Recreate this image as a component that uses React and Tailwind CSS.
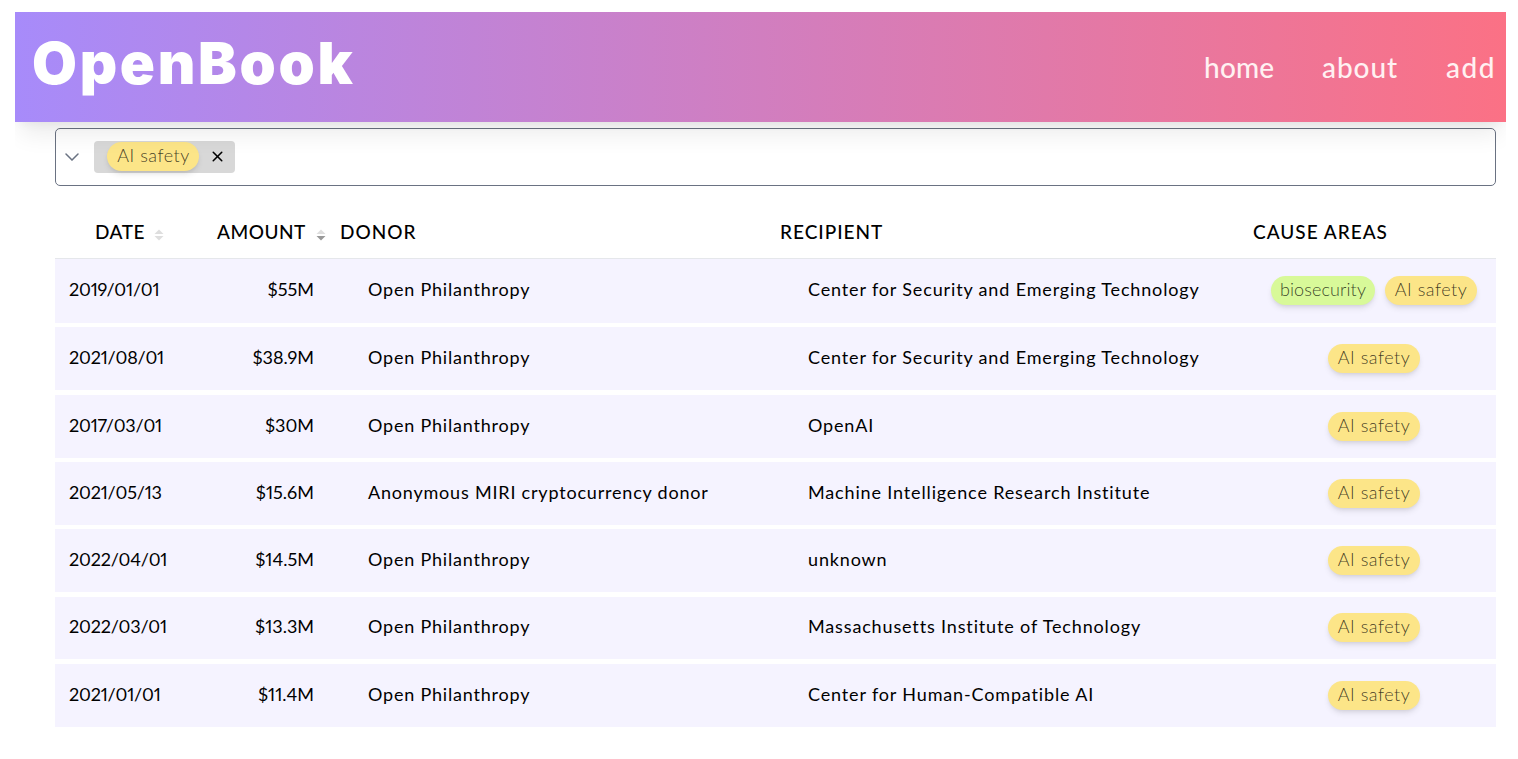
import { X } from "lucide-react";

const grants = [
  { date: "2019/01/01", amount: "$55M", donor: "Open Philanthropy", recipient: "Center for Security and Emerging Technology", causes: ["biosecurity", "AI safety"] },
  { date: "2021/08/01", amount: "$38.9M", donor: "Open Philanthropy", recipient: "Center for Security and Emerging Technology", causes: ["AI safety"] },
  { date: "2017/03/01", amount: "$30M", donor: "Open Philanthropy", recipient: "OpenAI", causes: ["AI safety"] },
  { date: "2021/05/13", amount: "$15.6M", donor: "Anonymous MIRI cryptocurrency donor", recipient: "Machine Intelligence Research Institute", causes: ["AI safety"] },
  { date: "2022/04/01", amount: "$14.5M", donor: "Open Philanthropy", recipient: "unknown", causes: ["AI safety"] },
  { date: "2022/03/01", amount: "$13.3M", donor: "Open Philanthropy", recipient: "Massachusetts Institute of Technology", causes: ["AI safety"] },
  { date: "2021/01/01", amount: "$11.4M", donor: "Open Philanthropy", recipient: "Center for Human-Compatible AI", causes: ["AI safety"] },
];

const tagStyles = {
  biosecurity: "w-[104px] bg-lime-200 tracking-[0.1px]",
  "AI safety": "w-[92px] bg-[#fce588] tracking-[0.5px]",
};

function Tag({ name }) {
  return (
    <span
      className={`flex h-[29px] shrink-0 items-center justify-center rounded-full pb-[2px] pl-px text-[18px] font-light whitespace-nowrap text-black/75 shadow-md ${tagStyles[name]}`}
    >
      {name}
    </span>
  );
}

function SortIcon({ active }) {
  return (
    <svg width="10" height="12" viewBox="0 0 10 12" className="shrink-0">
      <path d="M5 0.5 9.5 5h-9z" fill="#dedede" />
      <path d="M5 11.5 9.5 7h-9z" fill={active ? "#999999" : "#dedede"} />
    </svg>
  );
}

function Header() {
  return (
    <header className="relative z-10 flex h-[110px] items-start justify-between bg-linear-to-r/srgb from-[#a78bfa] to-[#fb7185] pr-[10px] pl-[17px] text-white shadow-[0_18px_22px_-6px_rgba(0,0,0,0.08),0_6px_10px_-5px_rgba(0,0,0,0.06)]">
      <h1 className="pt-[15px] font-[Inter,sans-serif] text-[58px] leading-[72px] font-black tracking-[2.7px]">
        OpenBook
      </h1>
      <nav className="flex gap-[48px] pt-[37px] text-[28px] leading-[36px] font-medium text-rose-50">
        <a href="#home" className="tracking-[0.1px]">home</a>
        <a href="#about" className="tracking-[0.9px]">about</a>
        <a href="#add" className="tracking-[1.5px]">add</a>
      </nav>
    </header>
  );
}

function CauseFilter() {
  return (
    <div className="flex h-[58px] items-center rounded-[5px] border border-gray-500 pl-[9px]">
      <svg width="14" height="8" viewBox="0 0 14 8" fill="none" className="text-gray-500">
        <path d="M1 1l6 6 6-6" stroke="currentColor" strokeWidth="1.5" strokeLinecap="round" />
      </svg>
      <div className="mb-[1px] ml-[15px] flex h-[32px] w-[141px] items-center rounded-[4px] bg-[#d8d8d8] pl-[13px]">
        <Tag name="AI safety" />
        <X size={17} strokeWidth={2.2} className="ml-[10px] text-black" />
      </div>
    </div>
  );
}

export default function App() {
  return (
    <div className="h-[759px] overflow-hidden bg-white pt-[12px] pr-[12px] pl-[15px] font-[Lato,sans-serif] text-black">
      <div className="h-full overflow-hidden">
        <Header />

        <main className="pt-[6px] pr-[10px] pl-[40px]">
          <CauseFilter />

          {/* Column titles */}
          <div className="mt-[20px] grid h-[52px] grid-cols-[149px_136px_440px_473px_1fr] items-center text-[19px] font-medium whitespace-nowrap tracking-[0.5px]">
            <div className="flex items-center gap-[9px] pl-[40px]">
              DATE
              <span className="pt-[5px]">
                <SortIcon />
              </span>
            </div>
            <div className="flex items-center gap-[10px] pl-[13px]">
              AMOUNT
              <span className="pt-[5px]">
                <SortIcon active />
              </span>
            </div>
            <div className="tracking-[1px]">DONOR</div>
            <div className="tracking-[1px]">RECIPIENT</div>
            <div className="tracking-[1px]">CAUSE AREAS</div>
          </div>

          <div className="flex flex-col gap-[4.4px]">
            {grants.map((grant) => (
              <div
                key={grant.date}
                className="grid h-[62.9px] grid-cols-[149px_136px_440px_473px_1fr] items-center bg-[#f5f3ff] pb-[2px] text-[18px] whitespace-nowrap first:h-[65px] first:border-t first:border-gray-200 first:pb-[4px]"
              >
                <div className="pl-[14px] tracking-[-0.2px] proportional-nums">{grant.date}</div>
                <div className="pr-[26px] text-right proportional-nums">{grant.amount}</div>
                <div className="pl-[28px] tracking-[0.8px]">{grant.donor}</div>
                <div className="pl-[28px] tracking-[0.85px]">{grant.recipient}</div>
                <div className="flex justify-center gap-[10px] pt-[2px] pr-[2px]">
                  {grant.causes.map((cause) => (
                    <Tag key={cause} name={cause} />
                  ))}
                </div>
              </div>
            ))}
          </div>
        </main>
      </div>
    </div>
  );
}
